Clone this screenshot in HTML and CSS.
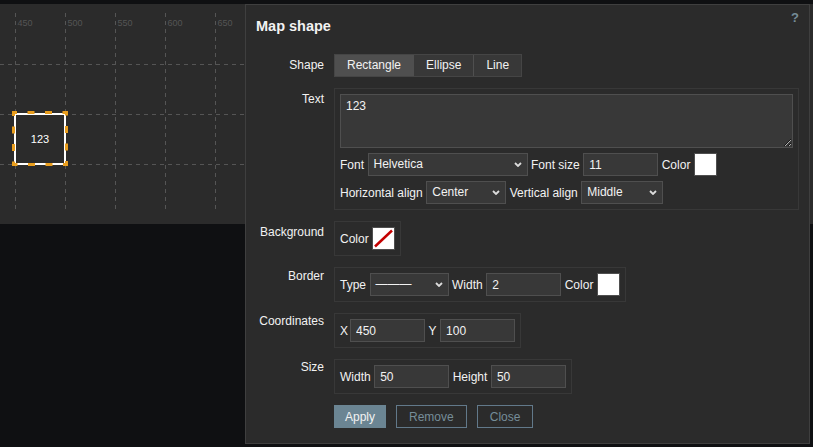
FILE: index.html
```html
<!DOCTYPE html>
<html lang="en">
<head>
	<meta charset="UTF-8">
	<title>Map shape</title>
	<link rel="stylesheet" href="styles.css">
</head>
<body>
	<div class="map">
		<svg class="map-grid" width="245" height="220" viewBox="0 0 245 220">
			<g class="grid-lines">
				<line x1="15.5" y1="9" x2="15.5" y2="206"/>
				<line x1="65.5" y1="9" x2="65.5" y2="206"/>
				<line x1="115.5" y1="9" x2="115.5" y2="206"/>
				<line x1="165.5" y1="9" x2="165.5" y2="206"/>
				<line x1="215.5" y1="9" x2="215.5" y2="206"/>
				<line x1="0" y1="60.5" x2="245" y2="60.5"/>
				<line x1="0" y1="110.5" x2="245" y2="110.5"/>
				<line x1="0" y1="160.5" x2="245" y2="160.5"/>
			</g>
			<g class="grid-labels">
				<text x="17.5" y="22">450</text>
				<text x="67.5" y="22">500</text>
				<text x="117.5" y="22">550</text>
				<text x="167.5" y="22">600</text>
				<text x="217.5" y="22">650</text>
			</g>
			<rect class="shape" x="15" y="110" width="50" height="50"/>
			<text class="shape-text" x="40" y="139">123</text>
			<rect class="shape-selected" x="13.5" y="108.5" width="53" height="52"/>
		</svg>
	</div>

	<div class="dialog">
		<div class="dialog-head">
			<h4 class="dialog-title">Map shape</h4>
			<span class="help">?</span>
		</div>
		<div class="form">
			<div class="form-label">Shape</div>
			<div class="form-field">
				<div class="segments">
					<span class="segment segment-on">Rectangle</span>
					<span class="segment">Ellipse</span>
					<span class="segment">Line</span>
				</div>
			</div>

			<div class="form-label">Text</div>
			<div class="form-field">
				<div class="box box-wide">
					<textarea class="textarea">123</textarea>
					<div class="box-row">
						<span>Font</span>
						<div class="select select-font"><span>Helvetica</span><svg class="chevron" width="8" height="5" viewBox="0 0 8 5"><path d="M1 1l3 3 3-3"/></svg></div>
						<span>Font size</span>
						<input class="input" type="text" value="11">
						<span>Color</span>
						<span class="swatch"></span>
					</div>
					<div class="box-row">
						<span>Horizontal align</span>
						<div class="select select-halign"><span>Center</span><svg class="chevron" width="8" height="5" viewBox="0 0 8 5"><path d="M1 1l3 3 3-3"/></svg></div>
						<span>Vertical align</span>
						<div class="select select-valign"><span>Middle</span><svg class="chevron" width="8" height="5" viewBox="0 0 8 5"><path d="M1 1l3 3 3-3"/></svg></div>
					</div>
				</div>
			</div>

			<div class="form-label">Background</div>
			<div class="form-field">
				<div class="box box-row">
					<span>Color</span>
					<span class="swatch"><svg width="21" height="21" viewBox="0 0 21 21"><line class="no-color" x1="2" y1="18.5" x2="19" y2="2.5"/></svg></span>
				</div>
			</div>

			<div class="form-label form-label-high">Border</div>
			<div class="form-field">
				<div class="box box-row">
					<span>Type</span>
					<div class="select select-type"><span>———</span><svg class="chevron" width="8" height="5" viewBox="0 0 8 5"><path d="M1 1l3 3 3-3"/></svg></div>
					<span>Width</span>
					<input class="input" type="text" value="2">
					<span>Color</span>
					<span class="swatch"></span>
				</div>
			</div>

			<div class="form-label form-label-top">Coordinates</div>
			<div class="form-field">
				<div class="box box-row">
					<span>X</span>
					<input class="input input-x" type="text" value="450">
					<span>Y</span>
					<input class="input" type="text" value="100">
				</div>
			</div>

			<div class="form-label form-label-top">Size</div>
			<div class="form-field">
				<div class="box box-row">
					<span>Width</span>
					<input class="input" type="text" value="50">
					<span>Height</span>
					<input class="input" type="text" value="50">
				</div>
			</div>

			<div></div>
			<div class="form-field buttons">
				<button class="btn btn-main" type="button">Apply</button>
				<button class="btn btn-alt" type="button">Remove</button>
				<button class="btn btn-alt" type="button">Close</button>
			</div>
		</div>
	</div>
</body>
</html>
```

FILE: styles.css
```css
body{
	margin: 0;
	padding-top: 4px;
	background: #0f1012;
	color: #f2f2f2;
	font-family: "Liberation Sans", Arial, sans-serif;
	font-size: 12px;
	line-height: 14px;
}
.map{
	height: 220px;
	background: #2b2b2b;
}
.map-grid{
	display: block;
}
.grid-lines line{
	stroke: #555;
	stroke-width: 1;
	stroke-dasharray: 4 4;
}
.grid-labels text{
	fill: #555;
	font-size: 9px;
	font-family: "Liberation Sans", Arial, sans-serif;
}
.shape{
	fill: none;
	stroke: #fff;
	stroke-width: 2;
}
.shape-text{
	fill: #fff;
	font-size: 11px;
	font-family: "Liberation Sans", Arial, sans-serif;
	text-anchor: middle;
}
.shape-selected{
	fill: none;
	stroke: #e99e1e;
	stroke-width: 3;
	stroke-dasharray: 7 10.5;
	stroke-dashoffset: 3.5;
}

/* dialog over the map */
.dialog{
	position: absolute;
	left: 245px;
	top: 4px;
	width: 565px;
	height: 440px;
	box-sizing: border-box;
	border: 1px solid #3f3f3f;
	background: #2b2b2b;
	padding: 13px 10px 0;
}
.dialog-head{
	display: flex;
	justify-content: space-between;
	align-items: flex-start;
	margin-bottom: 19px;
}
.dialog-title{
	margin: 0;
	font-size: 14.5px;
	line-height: 17px;
	font-weight: bold;
}
.help{
	margin-top: -7px;
	font-size: 13px;
	line-height: 13px;
	font-weight: bold;
	color: #768d99;
}
.form{
	display: grid;
	grid-template-columns: 68px 1fr;
	column-gap: 10px;
	row-gap: 11px;
}
.form-label{
	text-align: right;
	padding-top: 4px;
}
.form-label-high{
	padding-top: 2px;
}
.form-label-top{
	padding-top: 1px;
}
.form-field{
	display: flex;
	align-items: flex-start;
}
.segments{
	display: flex;
	height: 23px;
	box-sizing: border-box;
	border: 1px solid #454545;
	background: #383838;
}
.segment{
	padding: 0 12px;
	line-height: 21px;
	border-left: 1px solid #4f4f4f;
}
.segment:first-child{
	border-left: 0;
}
.segment-on{
	background: #4f4f4f;
}
.box{
	border: 1px solid #383838;
	padding: 5px;
}
.box-wide{
	flex: 1;
	display: flex;
	flex-direction: column;
	gap: 5px;
}
.box-row{
	display: flex;
	align-items: center;
	gap: 3.5px;
}
.textarea{
	display: block;
	width: 100%;
	height: 54px;
	box-sizing: border-box;
	margin: 0;
	padding: 4px 5px;
	border: 1px solid #4f4f4f;
	background: #383838;
	color: #f2f2f2;
	font: 12px/14px "Liberation Sans", Arial, sans-serif;
}
.input,.select{
	height: 23px;
	box-sizing: border-box;
	margin: 0;
	padding: 0 5px;
	border: 1px solid #4f4f4f;
	background: #383838;
	color: #f2f2f2;
	font: 12px "Liberation Sans", Arial, sans-serif;
	line-height: 21px;
}
.input{
	width: 75px;
}
.input-x{
	margin-left: -1.5px;
}
.select{
	display: flex;
	justify-content: space-between;
	align-items: center;
}
.select-font{
	width: 160px;
}
.select-halign{
	width: 80px;
}
.select-valign{
	width: 82px;
}
.select-type{
	width: 79px;
}
.chevron path{
	fill: none;
	stroke: #dcdcdc;
	stroke-width: 1.8;
}
.swatch{
	display: block;
	width: 23px;
	height: 23px;
	box-sizing: border-box;
	border: 1px solid #4f4f4f;
	background: #fff;
}
.swatch svg{
	display: block;
}
.no-color{
	stroke: #c40000;
	stroke-width: 2.5;
}
.buttons{
	gap: 10px;
}
.btn{
	height: 23px;
	margin: 0;
	padding: 0 12px;
	border: 1px solid #768d99;
	font: 12px "Liberation Sans", Arial, sans-serif;
	cursor: pointer;
}
.btn-main{
	padding: 0 10px;
	background: #6b8593;
	border-color: #6b8593;
	color: #f2f2f2;
}
.btn-alt{
	background: transparent;
	border-color: #62798a;
	color: #768d99;
}
```
